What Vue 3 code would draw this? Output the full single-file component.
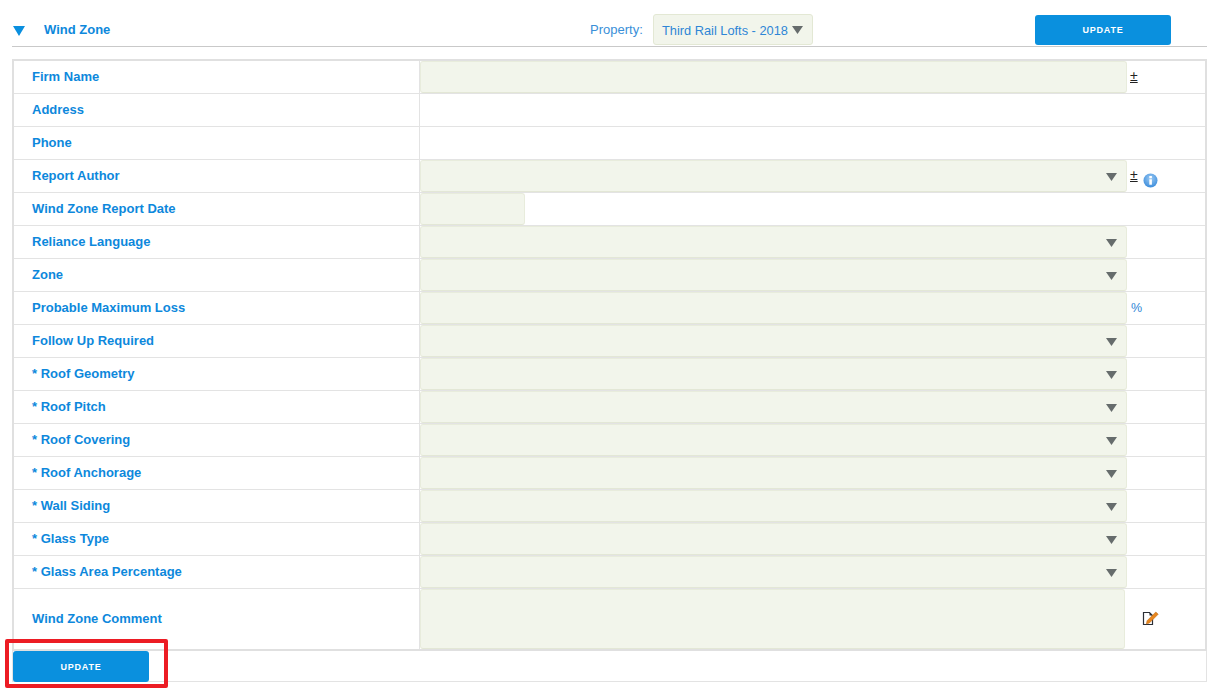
<script setup>
const rows = [
  { label: 'Firm Name', kind: 'text', suffix: 'plus' },
  { label: 'Address', kind: 'none' },
  { label: 'Phone', kind: 'none' },
  { label: 'Report Author', kind: 'select', suffix: 'plusinfo' },
  { label: 'Wind Zone Report Date', kind: 'date' },
  { label: 'Reliance Language', kind: 'select' },
  { label: 'Zone', kind: 'select' },
  { label: 'Probable Maximum Loss', kind: 'text', suffix: 'pct' },
  { label: 'Follow Up Required', kind: 'select' },
  { label: '* Roof Geometry', kind: 'select' },
  { label: '* Roof Pitch', kind: 'select' },
  { label: '* Roof Covering', kind: 'select' },
  { label: '* Roof Anchorage', kind: 'select' },
  { label: '* Wall Siding', kind: 'select' },
  { label: '* Glass Type', kind: 'select' },
  { label: '* Glass Area Percentage', kind: 'select' },
]
</script>

<template>
  <div class="page">
    <header class="head">
      <svg class="toggle" width="12" height="10" viewBox="0 0 12 10"><path d="M0 0h12L6 10z" fill="#0a8fdf" /></svg>
      <h1 class="title">Wind Zone</h1>
      <span class="prop-label">Property:</span>
      <div class="prop-select">
        <span>Third Rail Lofts - 2018</span>
        <svg width="11" height="8" viewBox="0 0 11 8"><path d="M0 0h11L5.500 8z" fill="#666c6c" /></svg>
      </div>
      <button class="btn btn-top" type="button">UPDATE</button>
    </header>

    <div class="form">
      <div v-for="r in rows" :key="r.label" class="row">
        <div class="label">{{ r.label }}</div>
        <div class="field">
          <div v-if="r.kind === 'text'" class="input" />
          <div v-else-if="r.kind === 'select'" class="input select">
            <svg width="11" height="8" viewBox="0 0 11 8"><path d="M0 0h11L5.500 8z" fill="#666c6c" /></svg>
          </div>
          <div v-else-if="r.kind === 'date'" class="input date" />
          <span v-if="r.suffix === 'plus' || r.suffix === 'plusinfo'" class="plus">±</span>
          <svg v-if="r.suffix === 'plusinfo'" class="info" width="15" height="15" viewBox="0 0 15 15">
            <defs>
              <radialGradient id="infoGrad" cx="50%" cy="35%" r="65%">
                <stop offset="0%" stop-color="#9ccbf5" />
                <stop offset="100%" stop-color="#3d8ddb" />
              </radialGradient>
            </defs>
            <circle cx="7.500" cy="7.500" r="7" fill="url(#infoGrad)" />
            <rect x="6.300" y="6.300" width="2.600" height="5.400" fill="#fff" />
            <rect x="6.300" y="3" width="2.600" height="2.200" fill="#fff" />
          </svg>
          <span v-if="r.suffix === 'pct'" class="pct">%</span>
        </div>
      </div>

      <div class="row row-comment">
        <div class="label">Wind Zone Comment</div>
        <div class="field">
          <div class="input textarea" />
          <svg class="note" width="17" height="15" viewBox="0 0 17 15">
            <path d="M1.500 1.500h6l3 3v9h-9z" fill="#fff" stroke="#2b2f36" stroke-width="1.200" />
            <path d="M7.500 1.500v3h3" fill="#2b2f36" />
            <path d="M5 9.800 13.800 1l2.400 2.200L7.400 12 4.400 13z" fill="#e8861e" stroke="#b5640f" stroke-width=".5" />
          </svg>
        </div>
      </div>
    </div>

    <div class="foot">
      <button class="btn btn-foot" type="button">UPDATE</button>
    </div>

    <div class="highlight" />
  </div>
</template>

<style>
html, body { background: #fff; }
</style>

<style scoped>
.page {
  position: relative;
  height: 691px;
  box-sizing: border-box;
  padding: 0 11px 0 12px;
  font-family: "Liberation Sans", Arial, sans-serif;
  color: #0d88dc;
  overflow: hidden;
}
.head {
  display: flex;
  align-items: flex-start;
  padding-top: 14px;
  height: 32px;
  border-bottom: 1px solid #c9c9c9;
}
.toggle { width: 12px; margin: 12px 0 0 1px; flex: none; }
.title {
  margin: 0 0 0 19px;
  width: 546px;
  font-size: 13px;
  font-weight: 700;
  line-height: 32px;
}
.prop-label {
  width: 63px;
  font-size: 13px;
  line-height: 32px;
  color: #3a8fd8;
  font-weight: 400;
}
.prop-select {
  display: flex;
  align-items: center;
  gap: 4px;
  box-sizing: border-box;
  width: 160px;
  height: 31px;
  padding: 1px 8px 0;
  background: #f2f5eb;
  border: 1px solid #e3e8d4;
  border-radius: 3px;
  font-size: 12.800px;
  color: #2e86d6;
  white-space: nowrap;
}
.btn {
  display: block;
  width: 136px;
  height: 31px;
  border: 0;
  padding: 0;
  border-radius: 3px;
  background: #0a90de;
  color: #fff;
  font-family: "Liberation Sans", Arial, sans-serif;
  font-size: 9px;
  font-weight: 700;
  letter-spacing: 0.8px;
}
.btn-top { margin: 1px 0 0 222px; height: 30px; }
.form {
  margin-top: 12px;
  border: 2px solid #e0e0e0;
}
.row {
  display: grid;
  grid-template-columns: 406px 1fr;
  height: 33px;
  box-sizing: border-box;
  border-bottom: 1px solid #e3e3e3;
}
.label {
  display: flex;
  align-items: center;
  padding: 0 0 2px 18px;
  border-right: 1px solid #e3e3e3;
  font-size: 13px;
  font-weight: 700;
}
.field {
  display: flex;
  align-items: flex-start;
  min-width: 0;
}
.input {
  box-sizing: border-box;
  width: 707px;
  height: 32px;
  flex: none;
  background: #f2f5eb;
  border: 1px solid #e8ecdc;
  border-bottom-color: #e3e7d6;
  border-radius: 3px;
}
.select {
  display: flex;
  align-items: center;
  justify-content: flex-end;
  padding: 2px 9px 0 0;
}
.date { width: 105px; }
.plus {
  margin: 8px 0 0 3px;
  font-size: 14px;
  line-height: 14px;
  color: #222;
  text-decoration: underline;
}
.info { margin: 13px 0 0 5px; flex: none; }
.pct {
  margin: 9px 0 0 4px;
  font-size: 12.500px;
  line-height: 14px;
  color: #2e86d6;
}
.row-comment {
  height: 60px;
  border-bottom: 0;
}
.textarea { width: 705px; height: 60px; }
.note { margin: 22px 0 0 17px; flex: none; }
.foot {
  height: 31px;
  box-sizing: border-box;
  border: 1px solid #e3e3e3;
  border-top: 0;
}
.btn-foot { height: 31px; }
.highlight {
  position: absolute;
  left: 5px;
  top: 639px;
  width: 163px;
  height: 49px;
  box-sizing: border-box;
  border: 4px solid #ec1c24;
  border-radius: 2px;
  pointer-events: none;
}
</style>
